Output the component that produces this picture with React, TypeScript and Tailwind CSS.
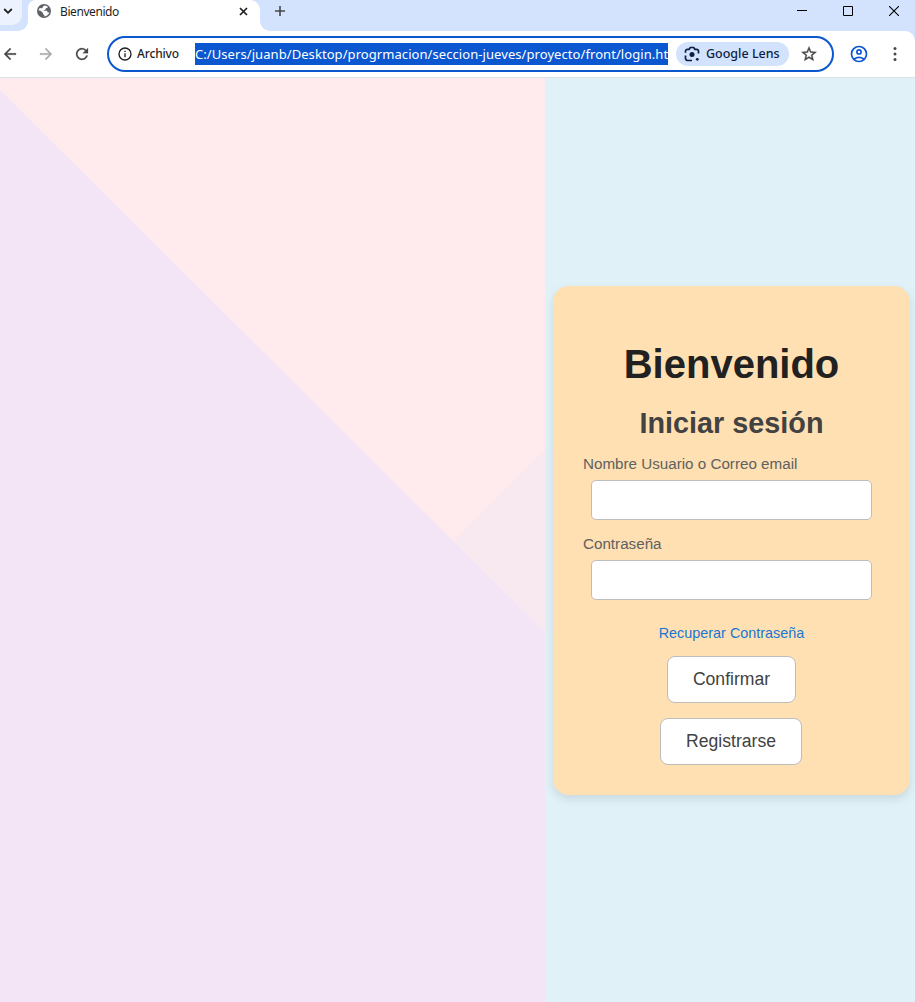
import type { ReactNode } from 'react';

function Icon({ size, className = '', children }: { size: number; className?: string; children: ReactNode }) {
  return (
    <svg width={size} height={size} viewBox="0 0 24 24" fill="currentColor" className={'shrink-0 ' + className} aria-hidden="true">
      {children}
    </svg>
  );
}

function TabStrip() {
  return (
    <div className="flex h-[31px] bg-[#d3e2fd]">
      <div className="flex w-7 bg-white">
        <div className="flex w-7 rounded-br-[10px] bg-[#d3e2fd]">
          <div className="flex h-[25px] w-[22px] items-center rounded-br-[10px] bg-[#ecf2fe] pl-[3px] pb-[3px]">
            <svg width="10" height="8" viewBox="0 0 10 8" fill="none" stroke="#1f1f1f" strokeWidth="1.8" aria-hidden="true">
              <path d="M1.2 2 5 5.8 8.8 2" />
            </svg>
          </div>
        </div>
      </div>
      <div className="flex w-[232px] rounded-tr-[10px] rounded-tl-[8px] bg-white pl-[9px] pr-[12px]">
        <svg className="mt-[4px] shrink-0" width="14" height="14" viewBox="0 0 14 14" aria-hidden="true">
          <circle cx="7" cy="7" r="7" fill="#5f6368" />
          <path
            fill="white"
            d="M7.600 1.500c1.300.1 2.500.6 3.400 1.500-.2.600-.7 1-1.400 1l-.9.200v.9c0 .5-.4.800-.9.800h-1v.8h2.600c.7 0 1.100.5 1.100 1.100v.7h1.200c.3 0 .6-.2.700-.5-.5 2.400-2.500 4.300-5 4.500v-1.600c-.8 0-1.400-.6-1.400-1.300v-.7L3.200 6.500H1.600c.2-1 .7-2 1.400-2.800.5.500 1.100.8 1.900.6.900-.3.700-1.200 1.100-1.700.4-.4 1.100-.6 1.600-1.100z"
          />
        </svg>
        <span className="ml-[9px] mt-[4px] whitespace-nowrap text-[12px] leading-4 tracking-[-0.42px] text-[#1f1f1f]">Bienvenido</span>
        <svg className="ml-auto mt-[7px]" width="9" height="9" viewBox="0 0 9 9" fill="none" stroke="#1f1f1f" strokeWidth="1.7" aria-hidden="true">
          <path d="m1 1 7 7M8 1 1 8" />
        </svg>
      </div>
      <div className="flex flex-1 bg-white">
        <div className="flex flex-1 rounded-bl-[10px] bg-[#d3e2fd]">
          <svg className="ml-[15px] mt-[6px]" width="10" height="10" viewBox="0 0 10 10" fill="none" stroke="#474747" strokeWidth="1.6" aria-hidden="true">
            <path d="M5 0v10M0 5h10" />
          </svg>
          <div className="ml-auto flex pt-[6px] text-black">
            <svg width="10" height="10" viewBox="0 0 10 10" stroke="currentColor" aria-hidden="true">
              <path d="M0 4.5h10" />
            </svg>
            <svg className="ml-9" width="10" height="10" viewBox="0 0 10 10" fill="none" stroke="currentColor" aria-hidden="true">
              <path d="M.5.5h9v9h-9z" />
            </svg>
            <svg className="ml-9 mr-[16px]" width="10" height="10" viewBox="0 0 10 10" fill="none" stroke="currentColor" strokeWidth="1.100" aria-hidden="true">
              <path d="m0 0 10 10M10 0 0 10" />
            </svg>
          </div>
        </div>
      </div>
    </div>
  );
}

function Toolbar() {
  return (
    <div className="bg-[#d3e2fd]">
      <div className="flex h-[47px] items-center rounded-tr-[10px] border-b border-[#dde1e6] bg-white">
        <Icon size={18} className="ml-px text-[#474747]">
          <path stroke="currentColor" strokeWidth="0.4" d="M20 11H7.830l5.590-5.590L12 4l-8 8 8 8 1.410-1.410L7.830 13H20v-2z" />
        </Icon>
        <Icon size={18} className="ml-[18px] text-[#ababab]">
          <path stroke="currentColor" strokeWidth="0.4" d="m12 4-1.410 1.410L16.170 11H4v2h12.170l-5.580 5.590L12 20l8-8z" />
        </Icon>
        <Icon size={18} className="ml-[18px] text-[#474747]">
          <path stroke="currentColor" strokeWidth="0.3" d="M17.650 6.350A7.960 7.960 0 0 0 12 4c-4.420 0-8 3.580-8 8s3.580 8 8 8c3.730 0 6.840-2.550 7.730-6h-2.080A6 6 0 1 1 16.220 7.780L13 11h7V4l-2.350 2.350z" />
        </Icon>
        <div className="ml-[16px] flex h-9 w-[727px] shrink-0 items-center rounded-full border-2 border-[#0b57d0] bg-white pl-[8px]">
          <Icon size={16} className="text-[#1f1f1f]">
            <path d="M11 7h2v2h-2zm0 4h2v6h-2zm1-9a10 10 0 1 0 0 20 10 10 0 0 0 0-20zm0 18a8 8 0 1 1 0-16 8 8 0 0 1 0 16z" />
          </Icon>
          <span className="ml-1 w-[58px] whitespace-nowrap text-[12px] font-medium leading-4 tracking-[-0.15px] text-[#1f1f1f]">Archivo</span>
          <div className="h-[22px] w-[473px] overflow-hidden whitespace-nowrap bg-[#0b57d0] text-[13px] leading-[22px] tracking-[0.07px] text-white">
            C:/Users/juanb/Desktop/progrmacion/seccion-jueves/proyecto/front/login.html
          </div>
          <div className="ml-2 flex h-6 w-[113px] items-center rounded-full bg-[#d3e2fd] pl-[7px] text-[#0b1f45]">
            <svg width="18" height="18" viewBox="0 0 18 18" fill="none" stroke="currentColor" strokeWidth="1.700" aria-hidden="true">
              <path d="M2.500 7.800V6.300a2 2 0 0 1 2-2h1.600l1.200-1.800h3.400l1.200 1.800h1.600a2 2 0 0 1 2 2v2.200M2.500 10.500V13.300a2.200 2.200 0 0 0 2.200 2.200H9" />
              <circle cx="9" cy="9.500" r="2.500" fill="currentColor" stroke="none" />
              <circle cx="14.300" cy="14.300" r="1.400" fill="currentColor" stroke="none" />
            </svg>
            <span className="ml-[5px] whitespace-nowrap text-[12.500px] font-medium leading-4">Google Lens</span>
          </div>
          <Icon size={18} className="ml-[11px] text-[#474747]">
            <path stroke="currentColor" strokeWidth="0.5" d="m22 9.240-7.190-.62L12 2 9.190 8.630 2 9.240l5.460 4.730L5.820 21 12 17.270 18.180 21l-1.630-7.030L22 9.240zM12 15.400l-3.760 2.270 1-4.280-3.320-2.880 4.380-.38L12 6.100l1.710 4.040 4.380.38-3.320 2.880 1 4.280L12 15.400z" />
          </Icon>
        </div>
        <Icon size={20} className="ml-[15px] text-[#0b57d0]">
          <path d="M12 2a10 10 0 1 0 0 20 10 10 0 0 0 0-20zM7.350 18.500C8.660 17.560 10.260 17 12 17s3.340.56 4.650 1.500a8 8 0 0 1-9.300 0zm10.790-1.380A10 10 0 0 0 12 15a10 10 0 0 0-6.140 2.120 8 8 0 1 1 12.280 0zM12 6a3.500 3.500 0 1 0 0 7 3.500 3.500 0 0 0 0-7zm0 5a1.500 1.500 0 1 1 0-3 1.500 1.500 0 0 1 0 3z" />
        </Icon>
        <Icon size={20} className="ml-[16px] text-[#474747]">
          <circle cx="12" cy="5.500" r="1.800" />
          <circle cx="12" cy="12" r="1.800" />
          <circle cx="12" cy="18.500" r="1.800" />
        </Icon>
      </div>
    </div>
  );
}

function Field({ id, label, type }: { id: string; label: string; type: string }) {
  return (
    <div className="h-20">
      <label htmlFor={id} className="block h-[26px] pt-px text-[15.200px] leading-[18px] text-[#616161]">
        {label}
      </label>
      <input id={id} type={type} className="mx-2 block h-10 w-[281px] rounded-[5px] border border-[#bdbdbd] bg-white px-2 outline-none" />
    </div>
  );
}

function LoginCard() {
  return (
    <form className="flex h-[509px] w-[357px] flex-col rounded-2xl bg-[#ffe0b2] px-[30px] shadow-[0_4px_10px_rgba(0,0,0,0.1)]">
      <h1 className="mt-[55px] text-center text-[40px] font-bold leading-[46px] text-[#212121]">Bienvenido</h1>
      <h2 className="mt-[19px] text-center text-[28.800px] font-bold leading-[34px] text-[#424242]">Iniciar sesión</h2>
      <div className="mt-[14px]">
        <Field id="usuario" label="Nombre Usuario o Correo email" type="text" />
        <Field id="clave" label="Contraseña" type="password" />
      </div>
      <a className="mt-[10px] self-center text-[14.400px] leading-[18px] text-[#1976d2]">Recuperar Contraseña</a>
      <button type="button" className="mt-[14px] h-[47px] w-[129px] self-center rounded-lg border border-[#bdbdbd] bg-white text-[17.600px] text-[#424242]">
        Confirmar
      </button>
      <button type="button" className="mt-[15px] mr-px h-[47px] w-[142px] self-center rounded-lg border border-[#bdbdbd] bg-white text-[17.600px] text-[#424242]">
        Registrarse
      </button>
    </form>
  );
}

export default function App() {
  return (
    <div className="flex h-[1002px] w-[915px] flex-col overflow-hidden bg-white">
      <header className="font-['Noto_Sans','Open_Sans',sans-serif]">
        <TabStrip />
        <Toolbar />
      </header>
      <main className="flex min-h-0 flex-1 font-['Liberation_Sans',sans-serif]">
        <div className="grid w-[545px] shrink-0 bg-[#ffebee]">
          <div className="col-start-1 row-start-1 bg-[#f8e8f0] [clip-path:polygon(546px_370px,454px_462px,546px_556px)]" />
          <div className="col-start-1 row-start-1 bg-[#f3e5f5] [clip-path:polygon(0_12px,546px_555px,546px_100%,0_100%)]" />
        </div>
        <div className="flex flex-1 items-start bg-[#e0f1f8] pl-[8px] pt-[208px]">
          <LoginCard />
        </div>
      </main>
    </div>
  );
}
